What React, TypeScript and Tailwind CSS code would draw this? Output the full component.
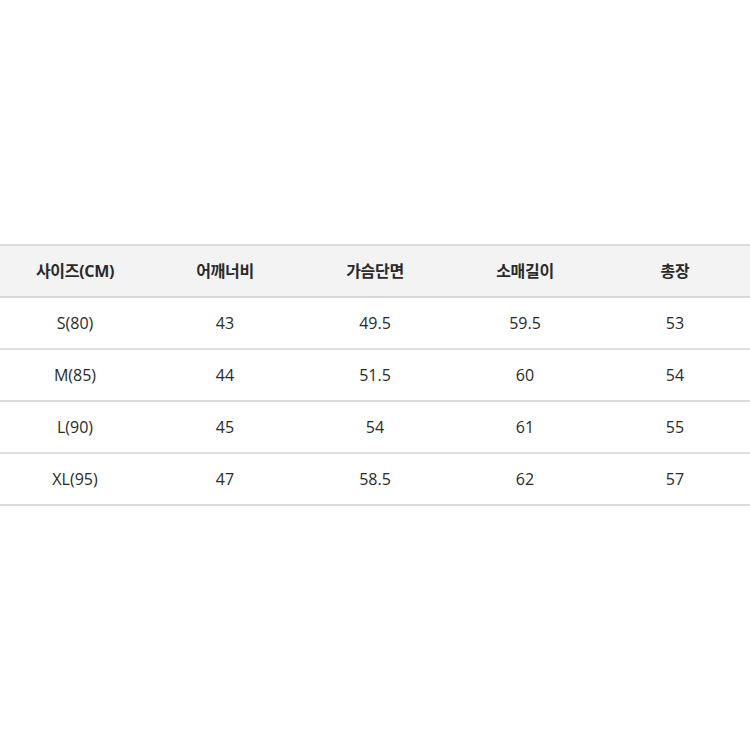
import React from "react";

const headers = ["사이즈(CM)", "어깨너비", "가슴단면", "소매길이", "총장"];
const rows = [
  ["S(80)", "43", "49.5", "59.5", "53"],
  ["M(85)", "44", "51.5", "60", "54"],
  ["L(90)", "45", "54", "61", "55"],
  ["XL(95)", "47", "58.5", "62", "57"],
];

export default function App() {
  return (
    <div
      className="w-[750px] h-[750px] bg-white pt-[244px] text-[#2a2a2a]"
      style={{ fontFamily: '"Open Sans", "Noto Sans CJK KR", sans-serif' }}
    >
      <div className="border-t-2 border-[#dddddd]">
        <div className="grid grid-cols-5 h-[52px] bg-[#f3f3f3] border-b-2 border-[#d8d8d8] items-center">
          {headers.map((h) => (
            <div key={h} className="text-center text-[16px] font-bold tracking-[-0.3px]">
              {h}
            </div>
          ))}
        </div>
        {rows.map((r) => (
          <div
            key={r[0]}
            className="grid grid-cols-5 h-[52px] border-b-2 border-[#dddddd] items-center"
          >
            {r.map((c, i) => (
              <div key={i} className="text-center text-[16px]">
                {c}
              </div>
            ))}
          </div>
        ))}
      </div>
    </div>
  );
}
